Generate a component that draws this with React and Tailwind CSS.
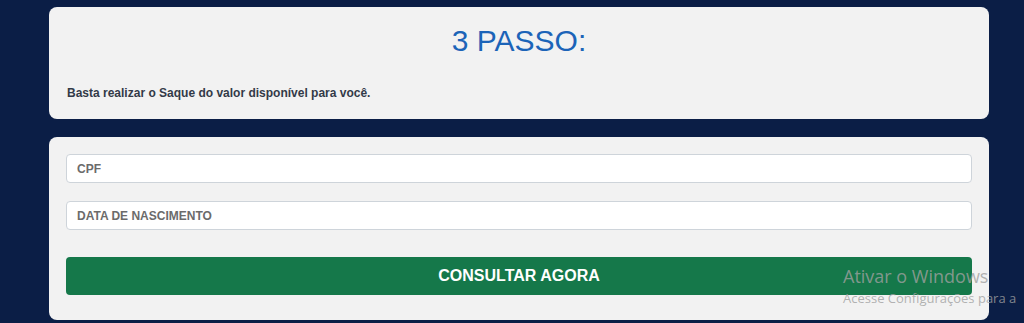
export default function App() {
  return (
    <div
      className="relative h-[323px] w-[1024px] overflow-hidden bg-[#0b1e46] pt-[7px]"
      style={{ fontFamily: '"Liberation Sans", Arial, sans-serif' }}
    >
      {/* passo 3 */}
      <div className="ml-[49px] w-[940px] rounded-lg bg-[#f2f2f2] px-[18px] pb-[18px] pt-4">
        <h2 className="text-center text-[30px] leading-[36px] text-[#1c64b8]">3 PASSO:</h2>
        <p className="mt-[26px] text-[12px] font-bold leading-4 text-[#333a48]">
          Basta realizar o Saque do valor disponível para você.
        </p>
      </div>

      {/* formulario */}
      <div className="ml-[49px] mt-[18px] w-[940px] rounded-lg bg-[#f2f2f2] px-[17px] pb-[25px] pt-[17px]">
        <input
          type="text"
          placeholder="CPF"
          className="block h-[29px] w-[906px] rounded border border-[#ced4da] bg-white px-[10px] text-[12px] font-bold text-[#555] outline-none placeholder:text-[#6b6b6b]"
        />
        <input
          type="text"
          placeholder="DATA DE NASCIMENTO"
          className="mt-[18px] block h-[29px] w-[906px] rounded border border-[#ced4da] bg-white px-[10px] text-[12px] font-bold text-[#555] outline-none placeholder:text-[#6b6b6b]"
        />
        <button className="mt-[27px] flex h-[38px] w-[906px] items-center justify-center rounded bg-[#15784a] text-[16px] font-bold text-white">
          CONSULTAR AGORA
        </button>
      </div>

      {/* marca d'agua do windows */}
      <div
        className="pointer-events-none absolute left-[843px] top-[264px] whitespace-nowrap text-[#a0a0a0]/80"
        style={{ fontFamily: '"Open Sans", "Noto Sans", sans-serif' }}
      >
        <div className="text-[18px] leading-[25px]">Ativar o Windows</div>
        <div className="text-[13px] leading-[18px]">Acesse Configurações para a</div>
      </div>
    </div>
  );
}
